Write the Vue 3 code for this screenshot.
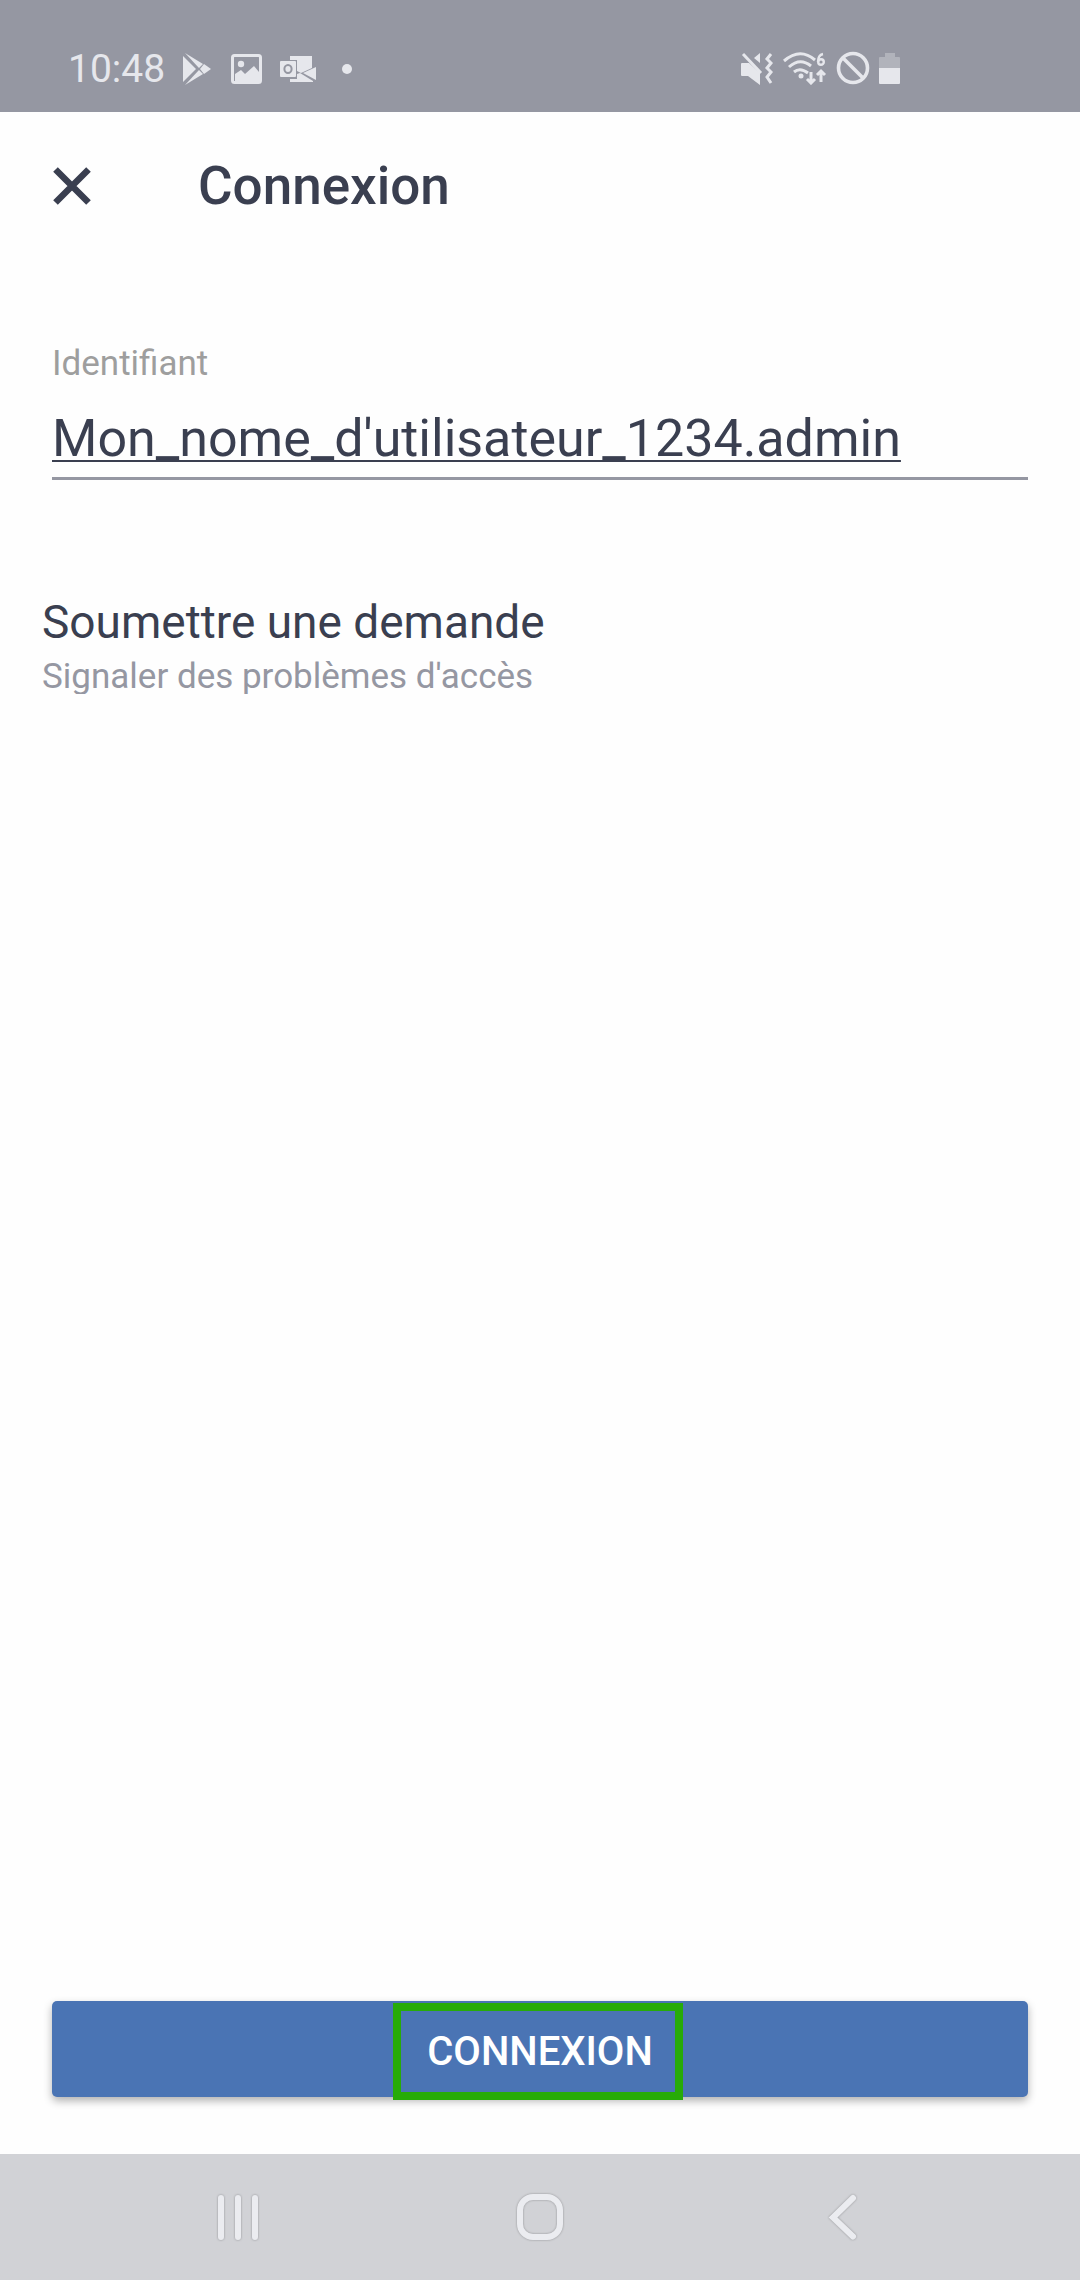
<script setup>
import { ref } from 'vue'

const username = ref("Mon_nome_d'utilisateur_1234.admin")
</script>

<template>
  <div class="screen">
    <header class="status-bar">
      <div class="status-left">
        <span class="time">10:48</span>
        <svg class="play" width="30" height="32" viewBox="0 0 30 32" fill="currentColor">
          <path d="M1 3v26L14 16z" />
          <path d="M3 0l18 11-4 4z" />
          <path d="M3 32l18-11-4-4z" />
          <path d="M22 11l7 5-7 5-4-5z" />
        </svg>
        <svg class="image" width="32" height="30" viewBox="0 0 32 30">
          <rect x="1.5" y="1.5" width="28" height="27" rx="2" fill="none" stroke="currentColor" stroke-width="3" />
          <circle cx="10" cy="10" r="3.2" fill="currentColor" />
          <path d="M4 20l6-4 4 4 9-8 5 6v9H4z" fill="currentColor" />
        </svg>
        <svg class="outlook" width="36" height="28" viewBox="0 0 36 28">
          <path d="M10 5V1h22v12l-11 5-4-2V5zM10 24h7v-5l3-1 13 8v1H10z" fill="currentColor" />
          <path d="M36 12v13L23 18z" fill="currentColor" />
          <rect x="0" y="6" width="16" height="16" rx="1" fill="currentColor" />
          <ellipse cx="8" cy="14" rx="3.6" ry="4" fill="none" stroke="#9597a2" stroke-width="2" />
        </svg>
        <span class="dot"></span>
      </div>
      <div class="status-right">
        <svg width="34" height="34" viewBox="0 0 34 34">
          <path d="M1 13q0-1 1-1h7l11 10v12L8 25H2q-1 0-1-1z" fill="currentColor" />
          <path d="M20 2v10l-6-5z" fill="currentColor" />
          <path d="M3 3l18 19" stroke="currentColor" stroke-width="3" />
          <path d="M31 3l-4 5 4 4-4 5 4 4-4 5 4 6" fill="none" stroke="currentColor" stroke-width="3" />
        </svg>
        <svg width="44" height="34" viewBox="0 0 44 34" fill="none" stroke="currentColor" stroke-width="3">
          <path d="M1 10q16-14 31-1M6 16q11-10 22-1M11 21q6-5 14 1" />
          <circle cx="18" cy="25" r="2.5" fill="currentColor" stroke="none" />
          <path d="M28 21v11M24 28l4 4 4-4M38 31V20M34 24l4-4 4 4" />
          <circle cx="38" cy="11" r="2.8" stroke-width="2.4" />
          <path d="M40 3q-5 1-5 8" stroke-width="2.4" />
        </svg>
        <svg width="34" height="34" viewBox="0 0 34 34" fill="none" stroke="currentColor" stroke-width="3.6">
          <circle cx="17" cy="17" r="14.5" />
          <path d="M7 7l20 20" />
        </svg>
        <svg width="22" height="32" viewBox="0 0 22 32" fill="currentColor">
          <path d="M1 5h5V1h10v4h4q1 0 1 1v10H0V6q0-1 1-1z" opacity=".35" />
          <path d="M0 16h21v15q0 1-1 1H1q-1 0-1-1z" />
        </svg>
      </div>
    </header>

    <div class="toolbar">
      <button class="close" type="button" aria-label="Fermer">
        <svg width="38" height="38" viewBox="0 0 38 38" fill="none" stroke="currentColor" stroke-width="6.5">
          <path d="M2.5 2.5l33 33M35.5 2.5l-33 33" />
        </svg>
      </button>
      <h1>Connexion</h1>
    </div>

    <main>
      <div class="field">
        <label for="username">Identifiant</label>
        <input id="username" v-model="username" type="text" spellcheck="false" />
      </div>
      <a class="request" href="#">
        <span class="request-title">Soumettre une demande</span>
        <span class="request-note">Signaler des problèmes d'accès</span>
      </a>
      <button class="submit" type="button">
        CONNEXION
        <span class="highlight"></span>
      </button>
    </main>

    <nav class="nav-bar">
      <button type="button" aria-label="Applications récentes">
        <svg width="48" height="48" viewBox="0 0 48 48">
          <path d="M5 5v39M22 5v39M39 5v39" />
        </svg>
      </button>
      <button type="button" aria-label="Accueil">
        <svg width="48" height="48" viewBox="0 0 48 48">
          <rect x="4" y="4" width="40" height="40" rx="13" />
        </svg>
      </button>
      <button type="button" aria-label="Retour">
        <svg width="48" height="48" viewBox="0 0 48 48">
          <path d="M37 5L17 24.500l20 19" stroke-linejoin="miter" />
        </svg>
      </button>
    </nav>
  </div>
</template>

<style>
body {
  margin: 0;
  background: #fefefe;
}
</style>

<style scoped>
.screen {
  display: flex;
  flex-direction: column;
  min-height: 100vh;
  color: #3a3f50;
  font-family: Roboto, sans-serif;
}

button {
  padding: 0;
  border: 0;
  background: none;
  color: inherit;
  font-family: inherit;
}

svg {
  display: block;
  flex: none;
}

.status-bar {
  display: flex;
  justify-content: space-between;
  box-sizing: border-box;
  height: 112px;
  padding: 24px 179px 0 68px;
  background: #9597a2;
  color: #e6e7ec;
}

.status-left,
.status-right {
  display: flex;
  align-items: center;
  height: 88px;
}

.status-left {
  height: 90px;
}

.status-right {
  gap: 9px;
}

.time {
  font-size: 39px;
  line-height: 48px;
}

.play {
  margin-left: 17px;
}

.image {
  margin-left: 19px;
}

.outlook {
  margin-left: 17px;
}

.dot {
  width: 10px;
  height: 10px;
  margin-left: 26px;
  border-radius: 50%;
  background: currentColor;
}

.toolbar {
  display: flex;
  align-items: center;
  gap: 107px;
  height: 147px;
  padding: 0 53px;
}

h1 {
  margin: 0;
  font-size: 53px;
  font-weight: 500;
  line-height: 62px;
}

main {
  display: flex;
  flex: 1;
  flex-direction: column;
  padding: 82px 52px 57px;
}

.field {
  display: flex;
  flex-direction: column;
}

label {
  color: #9e9e9e;
  font-size: 35px;
  line-height: 46px;
}

input {
  box-sizing: border-box;
  width: 100%;
  height: 93px;
  margin: 0;
  padding: 12px 0 0;
  border: 0;
  border-bottom: 3px solid #9597a2;
  outline: 0;
  background: none;
  color: inherit;
  font-family: inherit;
  font-size: 52px;
  text-decoration: underline;
  text-decoration-thickness: 2px;
  text-decoration-skip-ink: none;
  text-underline-offset: 4px;
}

.request {
  display: flex;
  flex-direction: column;
  align-self: flex-start;
  margin: 110px 0 0 -10px;
  color: inherit;
  text-decoration: none;
}

.request-title {
  font-size: 46px;
  line-height: 64px;
}

.request-note {
  height: 40px;
  overflow: hidden;
  color: #9597a2;
  font-size: 35px;
  line-height: 46px;
}

.submit {
  position: relative;
  height: 96px;
  margin-top: auto;
  padding-top: 4px;
  border-radius: 5px;
  background: #4a74b4;
  box-shadow: 0 4px 8px rgb(0 0 0 / 30%);
  color: #fff;
  font-size: 40px;
  font-weight: 500;
}

.highlight {
  position: absolute;
  top: 2px;
  bottom: -3px;
  left: calc(50% - 147px);
  box-sizing: border-box;
  width: 290px;
  border: 8px solid #27ab08;
}

.nav-bar {
  display: flex;
  align-items: center;
  justify-content: space-between;
  height: 126px;
  padding: 0 20%;
  background: #d1d2d6;
}

.nav-bar svg {
  fill: none;
  stroke: #ebecf0;
  stroke-width: 6;
  stroke-linecap: round;
  filter: drop-shadow(0 0 1px rgb(0 0 0 / 30%));
}
</style>
